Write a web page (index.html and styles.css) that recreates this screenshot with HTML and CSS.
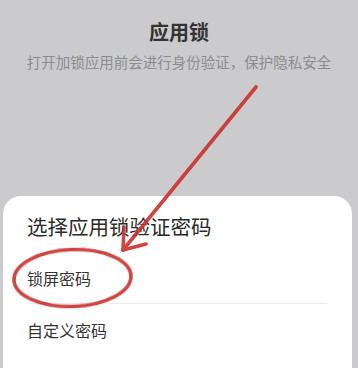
FILE: index.html
```html
<!DOCTYPE html>
<html lang="zh">
<head>
<meta charset="utf-8">
<link rel="stylesheet" href="styles.css">
</head>
<body>
<div class="page">
  <header class="top">
    <h1 class="title">应用锁</h1>
    <p class="subtitle">打开加锁应用前会进行身份验证，保护隐私安全</p>
  </header>
  <section class="sheet">
    <h2 class="sheet-title">选择应用锁验证密码</h2>
    <ul class="options">
      <li class="option">锁屏密码</li>
      <li class="option">自定义密码</li>
    </ul>
  </section>
  <svg class="annot" width="358" height="368" viewBox="0 0 358 368">
    <g fill="none" stroke="#c9302c" stroke-width="3.6" stroke-linecap="round" stroke-linejoin="round" opacity="0.9">
      <path d="M256 87 L123 250"/>
      <path d="M123 250 L146 244"/>
      <path d="M123 250 L124 227"/>
      <ellipse cx="72.5" cy="278" rx="58.5" ry="28.5" transform="rotate(-2 72.5 278)"/>
    </g>
  </svg>
</div>
</body>
</html>
```
FILE: styles.css
```css
html, body {
  margin: 0;
  padding: 0;
}
body {
  width: 358px;
  height: 368px;
  overflow: hidden;
  background: #cbcbcd;
  font-family: "Noto Sans CJK SC", "Noto Sans", sans-serif;
}
.page {
  position: relative;
  width: 358px;
  height: 368px;
  display: flex;
  flex-direction: column;
}
.top {
  display: flex;
  flex-direction: column;
  align-items: center;
  padding-top: 18px;
}
.title {
  margin: 0;
  font-size: 20px;
  line-height: 28px;
  font-weight: 700;
  color: #333333;
}
.subtitle {
  margin: 1px 0 0;
  font-size: 14.5px;
  line-height: 30px;
  color: #8c8c8e;
}
.sheet {
  margin: 119px 6px 0 3px;
  flex: 1;
  background: #ffffff;
  border-radius: 18px 18px 0 0;
  padding: 14px 25px 0 24px;
}
.sheet-title {
  margin: 0;
  font-size: 20.5px;
  line-height: 32px;
  font-weight: 400;
  color: #2b2b2b;
}
.options {
  list-style: none;
  margin: 11px 0 0;
  padding: 0;
}
.option {
  font-size: 16px;
  line-height: 24px;
  color: #333333;
  height: 51px;
  display: flex;
  align-items: center;
}
.option:first-child {
  height: 50px;
}
.option + .option {
  border-top: 1px solid #ededed;
}
.annot {
  position: absolute;
  left: 0;
  top: 0;
  pointer-events: none;
}
```
